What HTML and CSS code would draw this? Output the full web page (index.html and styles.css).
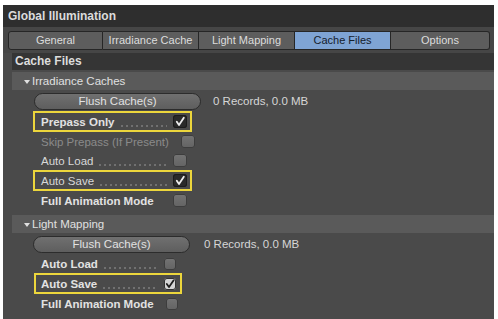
FILE: index.html
```html
<!DOCTYPE html>
<html>
<head>
<meta charset="utf-8">
<link rel="stylesheet" href="styles.css">
</head>
<body>
<div class="panel">
  <div class="title">Global Illumination</div>
  <div class="tabs">
    <div class="tab">General</div>
    <div class="tab">Irradiance Cache</div>
    <div class="tab">Light Mapping</div>
    <div class="tab active">Cache Files</div>
    <div class="tab">Options</div>
  </div>
  <div class="content">
    <div class="group-head">Cache Files</div>

    <div class="sub-head"><span class="tri"></span>Irradiance Caches</div>
    <div class="btn-row">
      <div class="btn wide">Flush Cache(s)</div>
      <div class="info">0 Records, 0.0 MB</div>
    </div>
    <div class="opt w1 hl"><span class="lbl b">Prepass Only</span><span class="dots"></span><span class="cb dark"><svg viewBox="0 0 14 13" width="14" height="13"><path d="M3.8 6.8 L6 10 L10.8 2.8" fill="none" stroke="#ececec" stroke-width="1.8" stroke-linecap="round" stroke-linejoin="round"/></svg></span></div>
    <div class="opt w1"><span class="lbl dim">Skip Prepass (If Present)</span><span class="dots none"></span><span class="cb"></span></div>
    <div class="opt w1"><span class="lbl">Auto Load</span><span class="dots"></span><span class="cb"></span></div>
    <div class="opt w1 hl"><span class="lbl">Auto Save</span><span class="dots"></span><span class="cb dark"><svg viewBox="0 0 14 13" width="14" height="13"><path d="M3.8 6.8 L6 10 L10.8 2.8" fill="none" stroke="#ececec" stroke-width="1.8" stroke-linecap="round" stroke-linejoin="round"/></svg></span></div>
    <div class="opt w1"><span class="lbl b">Full Animation Mode</span><span class="dots none"></span><span class="cb"></span></div>

    <div class="sub-head second"><span class="tri"></span>Light Mapping</div>
    <div class="btn-row">
      <div class="btn narrow">Flush Cache(s)</div>
      <div class="info wider">0 Records, 0.0 MB</div>
    </div>
    <div class="opt w2"><span class="lbl b">Auto Load</span><span class="dots"></span><span class="cb small"></span></div>
    <div class="opt w2 hl"><span class="lbl b">Auto Save</span><span class="dots"></span><span class="cb small light"><svg viewBox="0 0 12 12" width="12" height="12"><path d="M2.8 6 L5 9 L9.5 2.5" fill="none" stroke="#1e1e1e" stroke-width="1.8" stroke-linecap="round" stroke-linejoin="round"/></svg></span></div>
    <div class="opt w2"><span class="lbl b">Full Animation Mode</span><span class="dots none"></span><span class="cb small"></span></div>
  </div>
</div>
</body>
</html>
```

FILE: styles.css
```css
html, body {
  margin: 0;
  padding: 0;
  background: #ffffff;
}
body {
  font-family: "Liberation Sans", Arial, sans-serif;
  font-size: 11.5px;
  color: #d6d6d6;
}
.panel {
  margin: 5px 4px 0 3px;
  height: 314px;
  background: #4a4a4a;
  overflow: hidden;
}
.title {
  height: 22px;
  line-height: 22px;
  background: #2e2e2e;
  padding-left: 5px;
  font-weight: bold;
  font-size: 12px;
  color: #dcdcdc;
}
.tabs {
  display: grid;
  grid-template-columns: 95px 96px 96px 96px 99px;
  padding: 4px 0 3px 5px;
  background: #464646;
}
.tab {
  height: 17px;
  line-height: 17px;
  text-align: center;
  background: #5d5d5d;
  border: 1px solid #262626;
  border-left: none;
  color: #dcdcdc;
  font-size: 11px;
}
.tab:first-child {
  border-left: 1px solid #262626;
  border-radius: 3px 0 0 3px;
}
.tab:last-child {
  border-radius: 0 3px 3px 0;
}
.tab.active {
  background: #7fa4d4;
  color: #15202c;
}
.content {
  padding-left: 9px;
}
.group-head {
  height: 17px;
  line-height: 17px;
  background: #353535;
  padding-left: 3px;
  font-weight: bold;
  font-size: 12px;
  color: #dcdcdc;
}
.sub-head {
  margin-top: 2px;
  height: 18px;
  line-height: 18px;
  background: #5a5a5a;
  padding-left: 12px;
  color: #e0e0e0;
  font-size: 11.5px;
  display: flex;
  align-items: center;
}
.sub-head.second {
  margin-top: 5px;
}
.tri {
  width: 0;
  height: 0;
  border-left: 3.5px solid transparent;
  border-right: 3.5px solid transparent;
  border-top: 4px solid #e0e0e0;
  margin-right: 2px;
  margin-top: 1px;
}
.btn-row {
  display: flex;
  align-items: flex-start;
  height: 18px;
  padding-top: 3px;
  padding-left: 22px;
}
.btn {
  height: 15px;
  line-height: 15px;
  text-align: center;
  border: 1px solid #2c2c2c;
  border-radius: 9px;
  background: linear-gradient(#707070, #5e5e5e);
  color: #e2e2e2;
  font-size: 11.5px;
}
.btn.wide { width: 165px; }
.btn.narrow { width: 155px; margin-left: -1px; }
.info {
  margin-left: 12px;
  line-height: 17px;
  color: #d6d6d6;
}
.info.wider { margin-left: 14px; }
.opt {
  display: flex;
  align-items: center;
  height: 15px;
  border: 2px solid transparent;
}
.opt.hl {
  height: 17px;
  border-color: #ecd63c;
}
.opt.w1 {
  width: 146px;
  margin-left: 21px;
  padding: 0 3px 0 6px;
}
.opt.w2 {
  width: 135px;
  margin-left: 22px;
  padding: 0 4px 0 5px;
}
.lbl { white-space: nowrap; color: #d8d8d8; }
.lbl.b { font-weight: bold; color: #e2e2e2; }
.lbl.dim { color: #8a8a8a; }
.dots {
  flex: 1;
  height: 10px;
  margin: 0 6px 0 6px;
  background-image: radial-gradient(circle at 1px 1px, #7e7e7e 0.6px, transparent 1px);
  background-size: 5px 2px;
  background-repeat: repeat-x;
  background-position: left bottom;
}
.dots.none {
  background: none;
}
.cb {
  flex: none;
  width: 14px;
  height: 13px;
  border-radius: 3px;
  background: linear-gradient(#747474, #636363);
  box-shadow: inset 0 0 0 1px #3d3d3d;
  display: flex;
}
.cb.small {
  width: 12px;
  height: 12px;
}
.cb.dark {
  background: #2a2a2a;
  box-shadow: inset 0 0 0 1px #1c1c1c;
}
.cb.light {
  background: #d4d4d4;
  box-shadow: inset 0 0 0 1px #333;
}
```
